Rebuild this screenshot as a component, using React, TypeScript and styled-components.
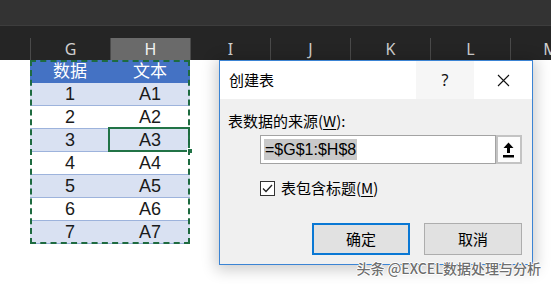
import React from 'react';
import styled, { createGlobalStyle } from 'styled-components';

const GlobalStyle = createGlobalStyle`
  html, body { margin: 0; padding: 0; background: #fff; overflow: hidden; }
  body { font-family: "Noto Sans CJK SC", "Noto Sans", sans-serif; }
`;

const Page = styled.div`
  position: relative;
  width: 551px;
  height: 284px;
  overflow: hidden;
  background: #fff;
`;

const TopBar = styled.div`
  height: 25px;
  background: #333333;
  border-bottom: 1px solid #3d3d3d;
`;

const ColumnBar = styled.div`
  height: 34px;
  background: #252525;
  display: flex;
  align-items: flex-end;
  overflow: hidden;
`;

const Corner = styled.div`
  flex: none;
  width: 30px;
  height: 22px;
`;

const ColHead = styled.div<{ $active?: boolean }>`
  flex: none;
  width: 80px;
  height: 22px;
  box-sizing: border-box;
  border-left: 1px solid #4a4a4a;
  background: ${p => (p.$active ? '#6a6a6a' : 'transparent')};
  color: ${p => (p.$active ? '#f2f2f2' : '#cfcfcf')};
  display: flex;
  align-items: center;
  justify-content: center;
  font: 16px/22px "Noto Sans", sans-serif;
`;

const Sheet = styled.div`
  padding-left: 30px;
`;

const TableBox = styled.div`
  position: relative;
  width: 160px;
  &::after {
    content: "";
    position: absolute;
    inset: 0;
    border: 2px dashed #1e6b40;
    pointer-events: none;
  }
`;

const Row = styled.div<{ $kind: 'head' | 'odd' | 'even' }>`
  display: grid;
  grid-template-columns: 80px 80px;
  height: 23px;
  box-sizing: border-box;
  background: ${p => (p.$kind === 'head' ? '#4472c4' : p.$kind === 'odd' ? '#d9e1f2' : '#ffffff')};
  border-bottom: ${p => (p.$kind === 'head' ? 'none' : '1px solid #9db3dc')};
  color: ${p => (p.$kind === 'head' ? '#ffffff' : '#1a1a1a')};
`;

const Cell = styled.div<{ $selected?: boolean; $cjk?: boolean }>`
  position: relative;
  display: flex;
  align-items: center;
  justify-content: center;
  font-family: "Liberation Sans", "Noto Sans CJK SC", sans-serif;
  font-size: ${p => (p.$cjk ? '17px' : '18px')};
  line-height: 20px;
  ${p =>
    p.$selected &&
    `
    &::before {
      content: "";
      position: absolute;
      left: -2px; top: -2px; right: 0; bottom: -1px;
      border: 2px solid #217346;
    }
    &::after {
      content: "";
      position: absolute;
      right: -3px; bottom: -3px;
      width: 4px; height: 4px;
      background: #217346;
      border: 1px solid #fff;
    }
  `}
`;

const Dialog = styled.div`
  position: absolute;
  left: 219px;
  top: 60px;
  width: 314px;
  height: 205px;
  box-sizing: border-box;
  border: 1px solid #3b84d4;
  background: #f0f0f0;
  box-shadow: 0 2px 14px 3px rgba(0, 0, 0, 0.2);
  display: flex;
  flex-direction: column;
`;

const TitleBar = styled.div`
  height: 38px;
  background: #fff;
  display: flex;
  align-items: center;
`;

const Title = styled.div`
  flex: 1;
  padding-left: 9px;
  font: 15px/20px "Noto Sans CJK SC", sans-serif;
  color: #000;
`;

const TitleButton = styled.div<{ $shade?: boolean }>`
  width: 58px;
  height: 38px;
  display: flex;
  align-items: center;
  justify-content: center;
  background: ${p => (p.$shade ? '#f6f6f6' : '#fff')};
  font: 16px/20px "Noto Sans", sans-serif;
  color: #111;
`;

const Body = styled.div`
  flex: 1;
  display: flex;
  flex-direction: column;
  padding: 13px 10px 0 8px;
`;

const Label = styled.div`
  font: 15px/18px "Noto Sans CJK SC", sans-serif;
  color: #000;
  u { text-decoration: underline; text-underline-offset: 2px; }
`;

const InputRow = styled.div`
  display: flex;
  margin: 5px 0 0 32px;
  height: 29px;
`;

const Input = styled.div`
  width: 237px;
  box-sizing: border-box;
  border: 1px solid #a3a3a3;
  background: #fff;
  display: flex;
  align-items: center;
  padding-left: 3px;
`;

const Selected = styled.span`
  background: #c9c9c9;
  color: #000;
  font: 16px/21px "Liberation Sans", Arial, sans-serif;
  padding: 0 1px;
`;

const PickButton = styled.div`
  width: 26px;
  box-sizing: border-box;
  border: 2px solid #c3c3c3;
  background: #fcfcfc;
  display: flex;
  align-items: center;
  justify-content: center;
`;

const CheckRow = styled.div`
  display: flex;
  align-items: center;
  margin: 15px 0 0 32px;
  gap: 6px;
`;

const CheckBox = styled.div`
  width: 15px;
  height: 15px;
  box-sizing: border-box;
  border: 1px solid #333;
  background: #fff;
  display: flex;
  align-items: center;
  justify-content: center;
`;

const ButtonRow = styled.div`
  display: flex;
  justify-content: flex-end;
  gap: 14px;
  margin-top: 26px;
`;

const Button = styled.div<{ $primary?: boolean }>`
  width: 98px;
  height: 32px;
  box-sizing: border-box;
  border: ${p => (p.$primary ? '2px solid #0a78d4' : '1px solid #adadad')};
  background: #e1e1e1;
  display: flex;
  align-items: center;
  justify-content: center;
  font: 15px/20px "Noto Sans CJK SC", sans-serif;
  color: #000;
`;

const Watermark = styled.div`
  position: absolute;
  right: 10px;
  top: 259px;
  font: 500 14px/18px "Noto Sans CJK SC", "Noto Sans", sans-serif;
  color: #6e6e6e;
  text-shadow: 1px 0 0 #fff, -1px 0 0 #fff, 0 1px 0 #fff, 0 -1px 0 #fff;
  white-space: nowrap;
`;

const columns = ['G', 'H', 'I', 'J', 'K', 'L', 'M'];
const rows = [1, 2, 3, 4, 5, 6, 7];

export default function App() {
  return (
    <Page>
      <GlobalStyle />
      <TopBar />
      <ColumnBar>
        <Corner />
        {columns.map(c => (
          <ColHead key={c} $active={c === 'H'}>
            {c}
          </ColHead>
        ))}
      </ColumnBar>
      <Sheet>
        <TableBox>
          <Row $kind="head">
            <Cell $cjk>数据</Cell>
            <Cell $cjk>文本</Cell>
          </Row>
          {rows.map(n => (
            <Row key={n} $kind={n % 2 === 1 ? 'odd' : 'even'}>
              <Cell>{n}</Cell>
              <Cell $selected={n === 3}>A{n}</Cell>
            </Row>
          ))}
        </TableBox>
      </Sheet>

      <Dialog>
        <TitleBar>
          <Title>创建表</Title>
          <TitleButton $shade>?</TitleButton>
          <TitleButton>
            <svg width="13" height="13" viewBox="0 0 13 13">
              <path d="M1 1 L12 12 M12 1 L1 12" stroke="#111" strokeWidth="1.1" fill="none" />
            </svg>
          </TitleButton>
        </TitleBar>
        <Body>
          <Label>
            表数据的来源(<u>W</u>):
          </Label>
          <InputRow>
            <Input>
              <Selected>=$G$1:$H$8</Selected>
            </Input>
            <PickButton>
              <svg width="12" height="16" viewBox="0 0 12 16">
                <polygon points="5.5,0.5 10.5,6 7,6 7,11 4,11 4,6 0.5,6" fill="#000" />
                <rect x="0" y="13" width="11" height="2.5" fill="#000" />
              </svg>
            </PickButton>
          </InputRow>
          <CheckRow>
            <CheckBox>
              <svg width="11" height="9" viewBox="0 0 11 9">
                <path d="M1 4.5 L4 7.5 L10 1" stroke="#222" strokeWidth="1.3" fill="none" />
              </svg>
            </CheckBox>
            <Label>
              表包含标题(<u>M</u>)
            </Label>
          </CheckRow>
          <ButtonRow>
            <Button $primary>确定</Button>
            <Button>取消</Button>
          </ButtonRow>
        </Body>
      </Dialog>

      <Watermark>头条 @EXCEL数据处理与分析</Watermark>
    </Page>
  );
}
